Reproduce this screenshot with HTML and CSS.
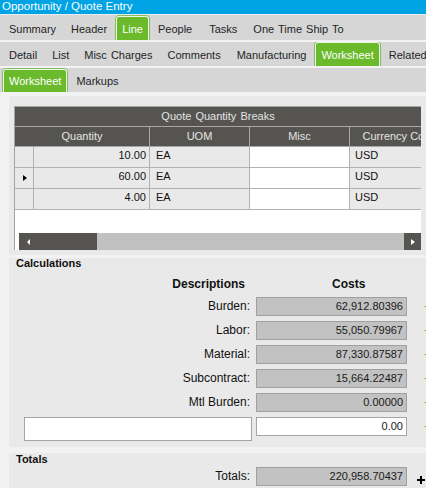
FILE: index.html
```html
<!DOCTYPE html>
<html>
<head>
<meta charset="utf-8">
<link rel="stylesheet" href="styles.css">
</head>
<body>
<div class="titlebar">Opportunity / Quote Entry</div>
<div class="tabrow row1">
  <span class="tab">Summary</span>
  <span class="tab">Header</span>
  <span class="tab active">Line</span>
  <span class="tab">People</span>
  <span class="tab">Tasks</span>
  <span class="tab">One Time Ship To</span>
</div>
<div class="tabrow row2">
  <span class="tab">Detail</span>
  <span class="tab">List</span>
  <span class="tab">Misc Charges</span>
  <span class="tab">Comments</span>
  <span class="tab">Manufacturing</span>
  <span class="tab active">Worksheet</span>
  <span class="tab">Related</span>
</div>
<div class="tabrow row3">
  <span class="tab active">Worksheet</span>
  <span class="tab">Markups</span>
</div>
<div class="content">
  <div class="panel gridpanel">
    <div class="grid">
      <div class="gh1">Quote Quantity Breaks</div>
      <div class="gh2">
        <div class="hc">Quantity</div>
        <div class="hc">UOM</div>
        <div class="hc">Misc</div>
        <div class="hc">Currency Code</div>
      </div>
      <div class="grow">
        <div class="c rh"></div>
        <div class="c num">10.00</div>
        <div class="c txt">EA</div>
        <div class="c misc"></div>
        <div class="c cur">USD</div>
      </div>
      <div class="grow">
        <div class="c rh"><span class="rowarrow"></span></div>
        <div class="c num">60.00</div>
        <div class="c txt">EA</div>
        <div class="c misc"></div>
        <div class="c cur">USD</div>
      </div>
      <div class="grow">
        <div class="c rh"></div>
        <div class="c num">4.00</div>
        <div class="c txt">EA</div>
        <div class="c misc"></div>
        <div class="c cur">USD</div>
      </div>
      <div class="gempty"></div>
      <div class="hscroll">
        <div class="sl"></div>
        <div class="thumb"><span class="arr-l"></span></div>
        <div class="track"></div>
        <div class="sbtn"><span class="arr-r"></span></div>
      </div>
    </div>
  </div>

  <div class="panel calc">
    <div class="sec-title">Calculations</div>
    <div class="colhdr">
      <div class="ch-desc">Descriptions</div>
      <div class="ch-cost">Costs</div>
    </div>
    <div class="rows">
      <div class="row"><div class="lbl">Burden:</div><div class="box">62,912.80396</div><div class="mark"></div></div>
      <div class="row"><div class="lbl">Labor:</div><div class="box">55,050.79967</div><div class="mark"></div></div>
      <div class="row"><div class="lbl">Material:</div><div class="box">87,330.87587</div><div class="mark"></div></div>
      <div class="row"><div class="lbl">Subcontract:</div><div class="box">15,664.22487</div><div class="mark"></div></div>
      <div class="row"><div class="lbl">Mtl Burden:</div><div class="box">0.00000</div><div class="mark"></div></div>
      <div class="row inrow"><div class="inleft"></div><div class="box white">0.00</div><div class="mark"></div></div>
    </div>
  </div>

  <div class="panel totals">
    <div class="sec-title">Totals</div>
    <div class="row trow">
      <div class="lbl">Totals:</div>
      <div class="box">220,958.70437</div>
      <svg class="plus" width="8" height="8" viewBox="0 0 8 8"><path d="M3 0h2v3h3v2H5v3H3V5H0V3h3z" fill="#000"/></svg>
    </div>
  </div>
</div>
</body>
</html>
```
FILE: styles.css
```css
* { box-sizing: border-box; }
html, body { margin: 0; padding: 0; }
body {
  width: 426px;
  height: 488px;
  overflow: hidden;
  background: #f2f2f4;
  font-family: "Liberation Sans", Arial, sans-serif;
  font-size: 11px;
  color: #111;
}
.titlebar {
  height: 14px;
  background: #00a3e4;
  color: #fff;
  font-size: 11.5px;
  line-height: 12px;
  padding-left: 2px;
  white-space: nowrap;
  overflow: hidden;
}
.tabrow {
  display: flex;
  align-items: flex-end;
  gap: 3px;
  padding-left: 3px;
  background: #d6d6d6;
  white-space: nowrap;
  overflow: hidden;
}
.row1 { height: 26px; border-top: 1px solid #ececec; }
.row2 { height: 24px; margin-top: 2px; }
.row3 { height: 24px; margin-top: 2px; }
.tab {
  flex: none;
  height: 24px;
  padding: 3px 6px 0;
  line-height: 21px;
  color: #1f1f1f;
  word-spacing: 1px;
}
.row1 .tab:nth-child(5) { margin-left: 2px; }
.row1 .tab:nth-child(6) { margin-left: 1px; }
.row2 .tab:nth-child(5) { margin-left: 1px; }
.row3 .tab { height: 23px; padding-top: 2px; }
.tab.active {
  background: #6aba2c;
  color: #fff;
  border: 1px solid #eef8e6;
  border-bottom: 0;
  border-radius: 3px 3px 0 0;
  padding: 2px 5px 0;
  box-shadow: -1px 0 0 #86bd62, 1px 0 0 #86bd62, 0 -1px 0 #86bd62;
}
.row3 .tab.active { padding-top: 1px; }

.content {
  padding: 4px 0 0 9px;
  display: flex;
  flex-direction: column;
}
.panel {
  background: #e9e9e9;
  border-radius: 2px 0 0 2px;
}
.gridpanel {
  height: 159px;
  padding: 10px 5px 5px 5px;
}
.grid {
  width: 407px;
  height: 144px;
  border-left: 1px solid #a4a4a4;
  border-top: 1px solid #a4a4a4;
  background: #fff;
  overflow: hidden;
}
.gh1 {
  height: 20px;
  background: #565451;
  border-bottom: 1px solid #a8a8a8;
  color: #e4e4e4;
  text-align: center;
  line-height: 19px;
  white-space: nowrap;
  word-spacing: 1px;
}
.gh2 {
  display: grid;
  grid-template-columns: 135px 100px 100px 100px;
  height: 20px;
  border-bottom: 1px solid #a8a8a8;
  background: #565451;
}
.hc {
  border-right: 1px solid #a8a8a8;
  color: #e4e4e4;
  text-align: center;
  line-height: 19px;
  white-space: nowrap;
}
.grow {
  display: grid;
  grid-template-columns: 19px 116px 100px 100px 100px;
  height: 21px;
  border-bottom: 1px solid #b2b2b2;
}
.c {
  border-right: 1px solid #b2b2b2;
  background: #e9e9e9;
  line-height: 16px;
  color: #111;
  white-space: nowrap;
}
.rh { display: flex; align-items: center; padding-left: 8px; }
.rowarrow {
  width: 0; height: 0;
  border-left: 4px solid #000;
  border-top: 3.5px solid transparent;
  border-bottom: 3.5px solid transparent;
}
.num { text-align: right; padding-right: 3px; }
.txt { padding-left: 6px; }
.misc { background: #fff; }
.cur { padding-left: 5px; }
.gempty { height: 23px; background: #fff; }
.hscroll { display: flex; height: 17px; }
.sl { width: 4px; background: #fff; }
.thumb {
  width: 78px;
  background: #565451;
  display: flex;
  align-items: center;
  padding-left: 8px;
}
.track { flex: 1; background: #c1c1c1; }
.sbtn {
  width: 17px;
  background: #565451;
  display: flex;
  align-items: center;
  padding-left: 7px;
}
.arr-l {
  width: 0; height: 0;
  border-right: 3px solid #fff;
  border-top: 3px solid transparent;
  border-bottom: 3px solid transparent;
}
.arr-r {
  width: 0; height: 0;
  border-left: 4px solid #fff;
  border-top: 3.5px solid transparent;
  border-bottom: 3.5px solid transparent;
}

.calc {
  margin-top: 3px;
  height: 189px;
  padding-bottom: 6px;
}
.sec-title {
  font-weight: bold;
  font-size: 11px;
  line-height: 11px;
  padding-left: 7px;
  color: #111;
}
.colhdr {
  display: flex;
  margin-top: 8px;
  padding-left: 15px;
  font-weight: bold;
  font-size: 12px;
  line-height: 14px;
}
.ch-desc { width: 228px; text-align: right; padding-right: 7px; }
.ch-cost { margin-left: 4px; padding-left: 76px; }
.rows {
  display: flex;
  flex-direction: column;
  gap: 5px;
  margin-top: 6px;
  padding-left: 15px;
}
.row { display: flex; height: 19px; }
.inrow { height: 24px; }
.lbl {
  width: 228px;
  text-align: right;
  padding-right: 2px;
  font-size: 12px;
  line-height: 19px;
  color: #111;
  white-space: nowrap;
}
.box {
  width: 151px;
  height: 19px;
  margin-left: 4px;
  background: #c2c2c2;
  border: 1px solid #a0a0a0;
  text-align: right;
  padding-right: 3px;
  line-height: 17px;
  font-size: 11px;
  color: #1a1a1a;
}
.box.white { background: #fff; border-color: #a6a6a6; }
.inleft {
  width: 228px;
  height: 24px;
  background: #fff;
  border: 1px solid #a6a6a6;
}
.mark {
  width: 2px;
  height: 1px;
  margin-left: 17px;
  margin-top: 9px;
  background: #eda23c;
}
.totals {
  margin-top: 6px;
  height: 40px;
  padding-top: 1px;
}
.trow { margin-top: 2px; padding-left: 15px; }
.plus { margin-left: 10px; margin-top: 9px; flex: none; }
```
